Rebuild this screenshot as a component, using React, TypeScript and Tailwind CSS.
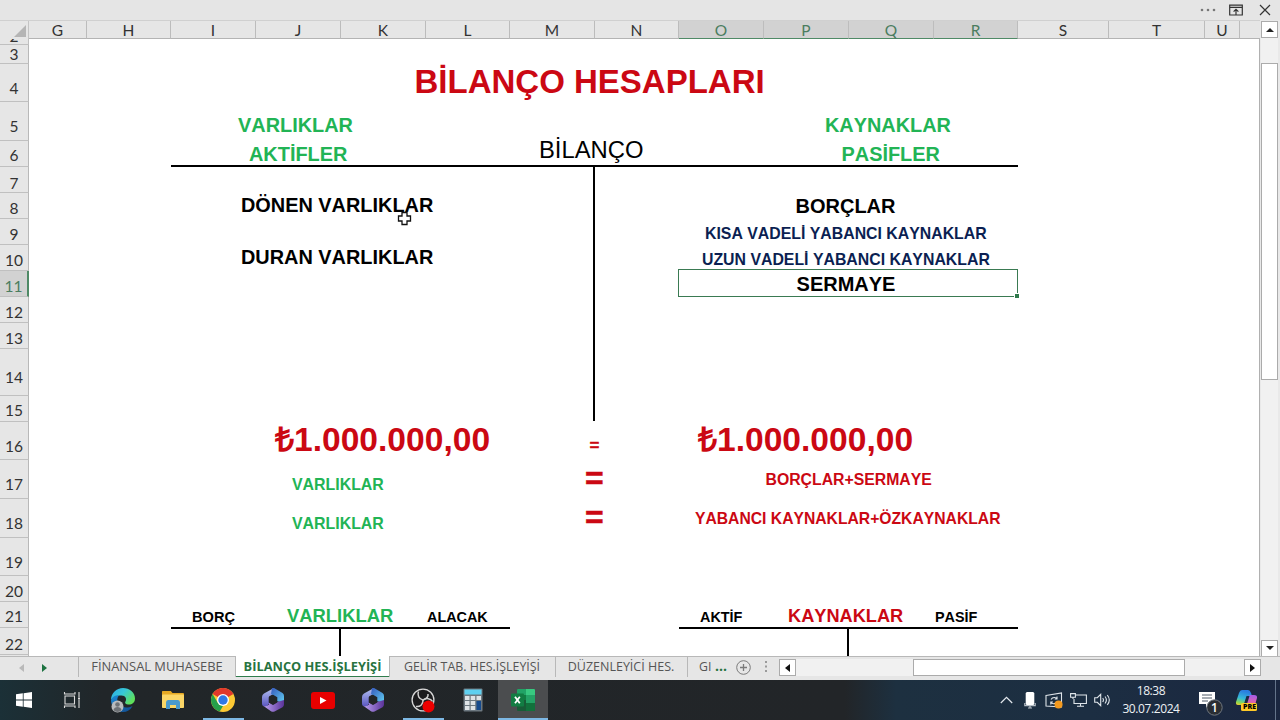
import React from 'react';

type CellItem = { text: string; cls: string };

const columns = [
  { id: 'G', w: 'w-[58px]' },
  { id: 'H', w: 'w-[84px]' },
  { id: 'I', w: 'w-[85px]' },
  { id: 'J', w: 'w-[85px]' },
  { id: 'K', w: 'w-[85px]' },
  { id: 'L', w: 'w-[84px]' },
  { id: 'M', w: 'w-[85px]' },
  { id: 'N', w: 'w-[84px]' },
  { id: 'O', w: 'w-[85px]', selected: true },
  { id: 'P', w: 'w-[85px]', selected: true },
  { id: 'Q', w: 'w-[85px]', selected: true },
  { id: 'R', w: 'w-[84px]', selected: true },
  { id: 'S', w: 'w-[91px]' },
  { id: 'T', w: 'w-[96px]' },
  { id: 'U', w: 'w-[35px]' },
];

const rows = [
  { id: 3, cls: 'h-[19px] pb-[1px]' },
  { id: 4, cls: 'h-[38px] pb-[5px]' },
  { id: 5, cls: 'h-[39px] pb-[6px]' },
  { id: 6, cls: 'h-[26px] pb-[3px]' },
  { id: 7, cls: 'h-[26px] pb-[1px]' },
  { id: 8, cls: 'h-[26px] pb-[2px]' },
  { id: 9, cls: 'h-[26px] pb-[2px]' },
  { id: 10, cls: 'h-[26px] pb-[2px]' },
  { id: 11, cls: 'h-[26px] pb-[2px]' },
  { id: 12, cls: 'h-[26px] pb-[2px]' },
  { id: 13, cls: 'h-[26px] pb-[2px]' },
  { id: 14, cls: 'h-[47px] pb-[10px]' },
  { id: 15, cls: 'h-[26px] pb-[3px]' },
  { id: 16, cls: 'h-[38px] pb-[5px]' },
  { id: 17, cls: 'h-[39px] pb-[6px]' },
  { id: 18, cls: 'h-[39px] pb-[6px]' },
  { id: 19, cls: 'h-[38px] pb-[5px]' },
  { id: 20, cls: 'h-[26px] pb-[2px]' },
  { id: 21, cls: 'h-[26px] pb-[3px]' },
  { id: 22, cls: 'h-[27px] pb-[2px]' },
];

const GREEN = 'text-[#22b455]';
const RED = 'text-[#cb0813]';
const NAVY = 'text-[#0b1f52]';

// col-start 1 = G, row-start 1 = row 2
const cells: CellItem[] = [
  { text: 'BİLANÇO HESAPLARI', cls: `col-start-5 row-start-3 pl-[73.5px] pb-[3px] text-[33px] font-bold ${RED}` },
  { text: 'VARLIKLAR', cls: `col-start-3 row-start-4 pl-[67px] pb-[4px] text-[19.9px] font-bold ${GREEN}` },
  { text: 'KAYNAKLAR', cls: `col-start-10 row-start-4 pl-[61px] pb-[4px] text-[19.9px] font-bold ${GREEN}` },
  { text: 'AKTİFLER', cls: `col-start-3 row-start-5 pl-[78px] pb-[1px] text-[19.9px] font-bold ${GREEN}` },
  { text: 'BİLANÇO', cls: 'col-start-7 row-start-5 pl-[29px] pb-[4px] text-[23.8px] text-black' },
  { text: 'PASİFLER', cls: `col-start-10 row-start-5 pl-[77.5px] pb-[1px] text-[19.9px] font-bold ${GREEN}` },
  { text: 'DÖNEN VARLIKLAR', cls: 'col-start-3 row-start-7 pl-[70px] pb-[2px] text-[19.9px] font-bold text-black' },
  { text: 'BORÇLAR', cls: 'col-start-10 row-start-7 pl-[31.5px] pb-[2px] text-[20px] font-bold text-black' },
  { text: 'KISA VADELİ YABANCI KAYNAKLAR', cls: `col-start-9 row-start-8 pl-[26px] pb-[2px] text-[15.85px] font-bold ${NAVY}` },
  { text: 'DURAN VARLIKLAR', cls: 'col-start-3 row-start-9 pl-[70px] pb-[2px] text-[19.9px] font-bold text-black' },
  { text: 'UZUN VADELİ YABANCI KAYNAKLAR', cls: `col-start-9 row-start-9 pl-[23px] pb-[2px] text-[15.85px] font-bold ${NAVY}` },
  { text: '₺1.000.000,00', cls: `col-start-4 row-start-15 pl-[19px] pb-[2px] text-[33.6px] font-bold ${RED}` },
  { text: '=', cls: `col-start-7 row-start-15 pl-[79.500px] pb-[5px] text-[17px] font-bold [-webkit-text-stroke:0.3px_#cb0813] ${RED}` },
  { text: '₺1.000.000,00', cls: `col-start-9 row-start-15 pl-[19px] pb-[2px] text-[33.6px] font-bold ${RED}` },
  { text: 'VARLIKLAR', cls: `col-start-4 row-start-16 pl-[36px] pb-[5px] text-[15.9px] font-bold ${GREEN}` },
  { text: '=', cls: `col-start-7 row-start-16 pl-[75px] pb-[4px] text-[32px] font-bold [-webkit-text-stroke:0.5px_#cb0813] ${RED}` },
  { text: 'BORÇLAR+SERMAYE', cls: `col-start-10 row-start-16 pl-[1.5px] pb-[10px] text-[15.8px] font-bold ${RED}` },
  { text: 'VARLIKLAR', cls: `col-start-4 row-start-17 pl-[36px] pb-[5px] text-[15.9px] font-bold ${GREEN}` },
  { text: '=', cls: `col-start-7 row-start-17 pl-[75px] pb-[4px] text-[32px] font-bold [-webkit-text-stroke:0.5px_#cb0813] ${RED}` },
  { text: 'YABANCI KAYNAKLAR+ÖZKAYNAKLAR', cls: `col-start-9 row-start-17 pl-[16px] pb-[10px] text-[15.7px] font-bold ${RED}` },
  { text: 'BORÇ', cls: 'col-start-3 row-start-20 pl-[21px] pb-[2px] text-[14.6px] font-bold text-black' },
  { text: 'VARLIKLAR', cls: `col-start-4 row-start-20 pl-[31px] pb-[2px] text-[18.4px] font-bold ${GREEN}` },
  { text: 'ALACAK', cls: 'col-start-6 row-start-20 pl-[1px] pb-[3px] text-[14.4px] font-bold text-black' },
  { text: 'AKTİF', cls: 'col-start-9 row-start-20 pl-[21px] pb-[3px] text-[14.4px] font-bold text-black' },
  { text: 'KAYNAKLAR', cls: `col-start-10 row-start-20 pl-[24px] pb-[2px] text-[18.2px] font-bold ${RED}` },
  { text: 'PASİF', cls: 'col-start-12 row-start-20 pl-[1px] pb-[3px] text-[14.4px] font-bold text-black' },
];

const TitleBar = () => (
  <div className="h-5 flex items-center justify-end bg-[#e5e5e5] text-[#444]">
    <svg width="16" height="4" className="mr-[13px]" fill="#777">
      <circle cx="2" cy="2" r="1.3" />
      <circle cx="8" cy="2" r="1.3" />
      <circle cx="14" cy="2" r="1.3" />
    </svg>
    <svg width="14" height="12" viewBox="0 0 14 12" className="mr-[16px]" fill="none" stroke="#333" strokeWidth="1.2">
      <path d="M.7 1.2h12.6v9.8H.7zM.7 3.4h12.6M7 11V5.5M4.6 7.6 7 5.3l2.4 2.3" />
    </svg>
    <svg width="12" height="12" viewBox="0 0 12 12" className="mr-[9px]" stroke="#333" strokeWidth="1.2">
      <path d="M1 1l10 10M11 1 1 11" />
    </svg>
  </div>
);

const ColumnHeader = () => (
  <div className="h-[19px] flex bg-[#e6e6e6] border-t border-[#d0d0d0] font-['Lato'] text-[15.5px] leading-[19px] text-[#333]">
    <div className="w-[29px] flex justify-end items-end pr-[2px] pb-[2px] border-r border-[#c4c4c4]">
      <svg width="12" height="12"><path d="M12 0v12H0z" fill="#b5b5b5" /></svg>
    </div>
    {columns.map((col) => (
      <div
        key={col.id}
        className={`${col.w} text-center border-r border-b ${
          col.selected ? 'bg-[#d2d2d2] text-[#4b7d5f] border-r-[#bdbdbd] border-b-[#4f8a66]' : 'border-r-[#bcbcbc] border-b-[#b4b4b4]'
        }`}
      >
        {col.id}
      </div>
    ))}
    <div className="flex-1 border-b border-[#b4b4b4]" />
  </div>
);

const RowHeader = () => (
  <div className="w-[29px] h-[617px] overflow-hidden bg-[#e6e6e6] font-['Lato'] text-[15.5px] leading-none text-[#333]">
    <div className="h-[6px] flex items-end justify-center overflow-hidden border-b border-r border-[#c0c0c0]">2</div>
    {rows.map((row) => (
      <div
        key={row.id}
        className={`${row.cls} flex items-end justify-center border-b border-b-[#c0c0c0] ${
          row.id === 11 ? 'bg-[#d2d2d2] text-[#4b7d5f] border-r-2 border-r-[#4f8a66]' : 'border-r border-r-[#b8b8b8]'
        }`}
      >
        {row.id}
      </div>
    ))}
    <div className="h-[3px] border-r border-[#b8b8b8]" />
  </div>
);

const Sheet = () => (
  <div className="relative w-[1231px] h-[617px] overflow-hidden bg-white border-r border-[#b0b0b0] grid grid-cols-[58px_84px_85px_85px_85px_84px_85px_84px_85px_85px_85px_84px_91px_96px_35px] grid-rows-[5px_19px_38px_39px_26px_26px_26px_26px_26px_26px_26px_26px_47px_26px_38px_39px_39px_38px_26px_26px_29px] font-['Liberation_Sans',Arial,sans-serif] leading-none [font-kerning:none]">
    {/* T account rules */}
    <div className="col-start-3 col-end-13 row-start-5 self-end h-[2px] -mb-px bg-black" />
    <div className="col-start-8 row-start-6 row-end-[15] w-[2px] -ml-[2px] bg-black" />
    <div className="col-start-3 col-end-7 row-start-20 self-end h-[2px] -mb-[2px] bg-black" />
    <div className="col-start-5 row-start-21 w-[2px] -ml-[2px] bg-black" />
    <div className="col-start-9 col-end-13 row-start-20 self-end h-[2px] -mb-[2px] bg-black" />
    <div className="col-start-11 row-start-21 w-[2px] -ml-[2px] bg-black" />

    {cells.map((cell, i) => (
      <div key={i} className={`${cell.cls} w-0 self-end leading-none whitespace-nowrap`}>
        {cell.text}
      </div>
    ))}

    {/* selected cell */}
    <div className="relative col-start-9 col-end-13 row-start-10 border border-[#3a7a52] -mt-px -mb-px -ml-px flex items-end justify-center pr-[4px] pb-[2px] text-[20px] font-bold text-black">
      SERMAYE
      <span className="absolute -right-[2px] -bottom-[2px] w-[5px] h-[5px] bg-[#2f7a4c] border-t border-l border-white" />
    </div>

    {/* cell cursor */}
    <svg className="absolute left-[368px] top-[172px]" width="15" height="15" viewBox="0 0 15 15">
      <path d="M5 1.5h5v3.5h3.5v5H10v3.5H5V10H1.5V5H5z" fill="#fff" stroke="#111" strokeWidth="1.3" />
    </svg>
  </div>
);

const arrowBox = 'w-[17px] h-[17px] shrink-0 flex items-center justify-center bg-white border border-[#ababab]';

const VerticalScroll = () => (
  <div className="w-[20px] h-[637px] flex flex-col items-start pl-[1px] pt-[1px] bg-[#e9e9e9]">
    <div className={arrowBox}>
      <svg width="8" height="5"><path d="M0 5l4-4 4 4z" fill="#222" /></svg>
    </div>
    <div className="w-[17px] h-[25px] bg-[#f1f1f1]" />
    <div className="w-[17px] h-[317px] bg-white border border-[#ababab]" />
    <div className="w-[17px] flex-1 bg-[#f1f1f1]" />
    <div className={arrowBox}>
      <svg width="8" height="5"><path d="M0 0l4 4 4-4z" fill="#222" /></svg>
    </div>
  </div>
);

const SheetTabs = () => (
  <div className="h-6 flex bg-[#e6e6e6] border-t border-[#b8b8b8] font-['Open_Sans'] text-[12.3px] leading-[20px] text-[#555]">
    <div className="w-[78px] h-[21px] flex items-center">
      <svg width="5" height="8" className="ml-[19px]"><path d="M5 0v8L0 4z" fill="#b9b9b9" /></svg>
      <svg width="5" height="8" className="ml-[18px]"><path d="M0 0v8l5-4z" fill="#1c7240" /></svg>
    </div>
    <div className="w-[158px] h-[20px] border-l border-r border-[#b8b8b8] text-center whitespace-nowrap text-[12.9px] leading-[19px]">FİNANSAL MUHASEBE</div>
    <div className="w-[153px] h-[21px] -mt-px bg-white border-b border-[#2f7d4d] text-center whitespace-nowrap text-[12.8px] font-bold text-[#27733f]">BİLANÇO HES.İŞLEYİŞİ</div>
    <div className="w-[167px] h-[20px] pr-[1px] border-l border-r border-[#b8b8b8] text-center whitespace-nowrap text-[12.4px]">GELİR TAB. HES.İŞLEYİŞİ</div>
    <div className="w-[132px] h-[20px] pr-px border-r border-[#b8b8b8] text-center whitespace-nowrap text-[12.5px]">DÜZENLEYİCİ HES.</div>
    <div className="w-[48px] h-[20px] flex pl-[11px]">
      <span className="w-[12px] overflow-hidden">GI</span>
      <span className="ml-[4px] text-[14px] font-bold text-[#27733f] leading-[18px]">...</span>
    </div>
    <svg width="16" height="16" viewBox="0 0 16 16" className="mt-[3px]" fill="none" stroke="#7a7a7a">
      <circle cx="7.5" cy="7.5" r="6.8" />
      <path d="M7.5 4v7M4 7.5h7" strokeWidth="1.3" />
    </svg>
    <svg width="3" height="12" className="ml-[13px] mt-[4px]" fill="#9a9a9a">
      <path d="M0 0h2v2H0zM0 4.5h2v2H0zM0 9h2v2H0z" />
    </svg>
    <div className="ml-[11px] mt-[2px] w-[482px] h-[17px] flex bg-[#f1f1f1]">
      <div className={arrowBox}>
        <svg width="5" height="8"><path d="M5 0v8L0 4z" fill="#111" /></svg>
      </div>
      <div className="w-[117px]" />
      <div className="w-[272px] bg-white border border-[#ababab]" />
      <div className="flex-1" />
      <div className={arrowBox}>
        <svg width="5" height="8"><path d="M0 0v8l5-4z" fill="#111" /></svg>
      </div>
    </div>
  </div>
);

const WindowsIcon = () => (
  <svg width="16" height="16" viewBox="0 0 16 16" fill="#fff">
    <path d="M0 2.3 6.8 1.3v6.3H0zM7.6 1.2 16 0v7.6H7.6zM0 8.4h6.8v6.3L0 13.7zM7.6 8.4H16V16l-8.4-1.2z" />
  </svg>
);

const TaskViewIcon = () => (
  <svg width="18" height="18" viewBox="0 0 18 18" fill="none" stroke="#dcdcdc" strokeWidth="1.1">
    <path d="M2 5h9.5v8H2zM1.5 1v2H12V1M1.5 17v-2H12v2M16 1v5M16 9v8" />
    <path d="M15 6.5h2v2h-2z" fill="#dcdcdc" stroke="none" />
  </svg>
);

const EdgeIcon = () => (
  <svg width="26" height="26" viewBox="0 0 26 26">
    <defs>
      <linearGradient id="edgeTop" x1="0" y1="0" x2="1" y2=".6">
        <stop offset="0" stopColor="#2aa7e8" />
        <stop offset=".5" stopColor="#37c9d6" />
        <stop offset="1" stopColor="#5fe05a" />
      </linearGradient>
      <linearGradient id="edgeLow" x1="0" y1="0" x2="1" y2="1">
        <stop offset="0" stopColor="#1b8ad8" />
        <stop offset="1" stopColor="#114a8b" />
      </linearGradient>
    </defs>
    <path d="M1 13C1 6 6.5 1 13 1s12 4.5 12 10.5c0 4-3 6-6 6-3.5 0-4.5-1.500-3.5-3 1.500-2.500 0-6-4-6C6 8.500 2 11 1 13z" fill="url(#edgeTop)" />
    <path d="M1 13c1-3 4.500-5.500 8-4.500-2 2-2.500 6 0 9 3 3.500 8.500 4 13.500 1.500C20.500 23 17 25 13 25 6 25 1 20 1 13z" fill="url(#edgeLow)" />
    <circle cx="7.5" cy="19.5" r="6" fill="#b9bbbd" />
    <circle cx="7.5" cy="17.5" r="2.3" fill="#6d7175" />
    <path d="M3.5 23c.5-4 7.5-4 8 0-2 2.5-6 2.5-8 0z" fill="#6d7175" />
  </svg>
);

const FolderIcon = () => (
  <svg width="22" height="20" viewBox="0 0 22 20">
    <path d="M0 1.5Q0 1 .8 1h8l1.7 2H21q1 0 1 1v4H0z" fill="#e5a823" />
    <rect y="4.5" width="22" height="13.5" rx=".8" fill="#fbd667" />
    <path d="M4 19v-6.5Q4 10 6 10h10q2 0 2 2.5V19h-4v-4H8v4z" fill="#4a9ace" />
  </svg>
);

const ChromeIcon = () => (
  <svg width="24" height="24" viewBox="0 0 24 24">
    <circle cx="12" cy="12" r="12" fill="#fcc934" />
    <path d="M12 12 1.6 6A12 12 0 0 1 22.4 6z" fill="#e0382c" />
    <path d="M1.6 6 6.9 15l5.1 3-3.3 5.5A12 12 0 0 1 1.6 6z" fill="#25a04b" />
    <circle cx="12" cy="12" r="6" fill="#fff" />
    <circle cx="12" cy="12" r="4.7" fill="#2f78e6" />
  </svg>
);

const M365Icon = ({ id }: { id: string }) => (
  <svg width="22" height="24" viewBox="0 0 22 24">
    <defs>
      <linearGradient id={`${id}a`} x1="0" y1="0" x2="0" y2="1">
        <stop offset="0" stopColor="#b4c3f2" />
        <stop offset="1" stopColor="#5a55c0" />
      </linearGradient>
      <linearGradient id={`${id}b`} x1="0" y1="0" x2="1" y2="1">
        <stop offset="0" stopColor="#3457bd" />
        <stop offset="1" stopColor="#62d0f2" />
      </linearGradient>
      <linearGradient id={`${id}c`} x1="0" y1="0" x2="1" y2="0">
        <stop offset="0" stopColor="#bda4f4" />
        <stop offset="1" stopColor="#5b3399" />
      </linearGradient>
    </defs>
    <path d="M12 0 2 5.5Q0 6.700 0 9v6.5Q0 18.5 3 18.5q3-.5 4-3V8.5L13 5z" fill={`url(#${id}a)`} />
    <path d="M10 0h2l8.500 5Q22 6 22 8v7l-7.500-2V9.500L9 6z" fill={`url(#${id}b)`} />
    <path d="M1.500 18q3 1 5.500-1.500v-2l4 2 4-2.500 7-2v4.500q0 1.800-1.500 2.700L13 23.300q-2 1-4 0z" fill={`url(#${id}c)`} />
    <path d="M6.700 9.300 11 6.700l4.300 2.600v5.200L11 17l-4.300-2.500z" fill="#222528" />
  </svg>
);

const YoutubeIcon = () => (
  <svg width="24" height="17" viewBox="0 0 24 17">
    <rect width="24" height="17" rx="3" fill="#e80000" />
    <path d="M9 5v7l6.5-3.5z" fill="#fff" />
  </svg>
);

const ObsIcon = () => (
  <svg width="25" height="25" viewBox="0 0 25 25">
    <circle cx="12" cy="12" r="10.9" fill="#1b1b1d" stroke="#d8d8d8" strokeWidth="1.3" />
    <g fill="none" stroke="#cfcfcf" strokeWidth="1.5">
      <path d="M7.5 3.5c-1.5 4 .5 7.5 4.5 8.5 3.5-2.5 7.5-1.5 9.5 1.5" />
      <path d="M12 12c.3 4-2.5 7-7 6.5" />
      <path d="M12 12c3-1 5.5-3 5-6" />
    </g>
    <circle cx="17.5" cy="18.5" r="6" fill="#ec0000" />
  </svg>
);

const CalcIcon = () => (
  <svg width="20" height="24" viewBox="0 0 20 24">
    <rect x=".5" y=".5" width="19" height="23" rx="1" fill="#6d7880" />
    <rect x="1.5" y="1.5" width="17" height="5" fill="#5fd0f0" />
    <path d="M2 8h4.5v4H2zM7.7 8h4.5v4H7.7zM13.5 8H18v4h-4.5zM2 13h4.5v4H2zM7.7 13h4.5v4H7.7zM2 18h4.5v4H2zM7.7 18h4.5v4H7.7z" fill="#dfe3e6" />
    <path d="M13.5 13H18v9h-4.5z" fill="#164a8c" />
  </svg>
);

const ExcelIcon = () => (
  <svg width="24" height="22" viewBox="0 0 24 22">
    <rect x="6" width="18" height="22" rx="1" fill="#185c37" />
    <path d="M6 1q0-1 1-1h8v6H6z" fill="#21a366" />
    <path d="M15 0h8q1 0 1 1v5h-9z" fill="#38c880" />
    <path d="M6 6h9v5H6z" fill="#107c41" />
    <path d="M15 6h9v8h-9z" fill="#24a266" />
    <path d="M15 14h9v7q0 1-1 1h-8z" fill="#12713c" />
    <rect y="4.5" width="13" height="13" rx="1" fill="#127d43" />
    <path d="M4 7.8 8.8 14.2M8.8 7.8 4 14.2" stroke="#fff" strokeWidth="1.8" />
  </svg>
);

const apps = [
  { key: 'edge', icon: <EdgeIcon /> },
  { key: 'folder', icon: <FolderIcon /> },
  { key: 'chrome', icon: <ChromeIcon />, open: true },
  { key: 'm365-1', icon: <M365Icon id="ma" /> },
  { key: 'youtube', icon: <YoutubeIcon /> },
  { key: 'm365-2', icon: <M365Icon id="mb" /> },
  { key: 'obs', icon: <ObsIcon />, open: true },
  { key: 'calc', icon: <CalcIcon /> },
  { key: 'excel', icon: <ExcelIcon />, active: true },
];

const Taskbar = () => (
  <div className="h-10 flex bg-[linear-gradient(90deg,#1b3037_0%,#212629_8%,#222528_66%,#1d3040_70%,#1c2e42_85%,#1b2740_100%)]">
    <div className="w-[48px] flex items-center justify-center"><WindowsIcon /></div>
    <div className="w-[50px] flex items-center justify-center pr-[2px]"><TaskViewIcon /></div>
    {apps.map((app) => (
      <div
        key={app.key}
        className={`relative w-[50px] flex items-center justify-center ${app.active ? 'bg-[#4b4d4f]' : ''}`}
      >
        {app.icon}
        {app.open && <span className="absolute bottom-0 left-[5px] w-[41px] h-[2px] bg-[#7db8e4]" />}
        {app.active && <span className="absolute bottom-0 left-0 w-full h-[2px] bg-[#7db8e4]" />}
      </div>
    ))}
    <div className="flex-1" />
    <div className="flex items-center text-white">
      <svg width="13" height="8" viewBox="0 0 13 8" fill="none" stroke="#e4e9ee" strokeWidth="1.2">
        <path d="M.8 7 6.5 1.3 12.2 7" />
      </svg>
      <svg width="12" height="17" viewBox="0 0 12 17" className="ml-[11px]">
        <rect x="1.7" width="8.6" height="13" rx="1.5" fill="#fff" />
        <path d="M.8 11v2.7h10.4V11M6 13.5V16M4 16h4" fill="none" stroke="#b8c0c8" strokeWidth="1.2" />
      </svg>
      <svg width="18" height="17" viewBox="0 0 18 17" className="ml-[9px]" fill="none" stroke="#dfe5ea" strokeWidth="1.1">
        <path d="M1 3.5 16.5 1v14L1 14zM6 7.5c1.5-2.5 5-2.5 6-.5M12 4.5V7H9.7M11.5 10c-1.2 2.2-4.5 2.2-5.7.2M5.8 12.5V10H8" />
        <circle cx="13.5" cy="12.5" r="4" fill="#f39a1f" stroke="none" />
      </svg>
      <svg width="17" height="14" viewBox="0 0 17 14" className="ml-[7px]" fill="none" stroke="#dfe5ea" strokeWidth="1.1">
        <path d="M6 2h10.4v8.5H4V6M7 13.3h7M10.5 10.5v2.5M.6.6h4.8v3.7H.6zM3 4.3V6" />
      </svg>
      <svg width="17" height="14" viewBox="0 0 17 14" className="ml-[7px]" fill="none" stroke="#dfe5ea" strokeWidth="1.1">
        <path d="M.7 4.7h2.6L6.7 1.3v11.4L3.3 9.3H.7zM8.7 5q1.5 2 0 4M11 3.5q2.8 3.5 0 7M13.3 2q4 5 0 10" />
      </svg>
    </div>
    <div className="ml-[9px] w-[62px] text-center font-['Open_Sans'] text-[12px] leading-[18px] pt-[2px] text-[#eef1f4]">
      <div className="-tracking-[0.4px]">18:38</div>
      <div className="-tracking-[0.4px] whitespace-nowrap">30.07.2024</div>
    </div>
    <div className="relative ml-[16px] w-[26px]">
      <svg width="26" height="28" viewBox="0 0 26 28" className="mt-[10px]">
        <path d="M1 2h16v12H11l-3 4v-4H1z" fill="#fff" />
        <path d="M4 5h10M4 8h10M4 11h6" stroke="#4d5966" />
        <circle cx="16.5" cy="17.5" r="7.7" fill="#2a2e33" stroke="#70777e" />
      </svg>
      <span className="absolute left-[13px] top-[20px] font-['Open_Sans'] text-[12px] font-semibold leading-[15px] text-white">1</span>
    </div>
    <div className="relative ml-[11px] w-[24px]">
      <svg width="24" height="24" viewBox="0 0 24 24" className="mt-[9px]">
        <defs>
          <linearGradient id="copA" x1=".3" y1="0" x2="0" y2="1">
            <stop offset="0" stopColor="#2a7de0" />
            <stop offset=".5" stopColor="#35b9d8" />
            <stop offset=".8" stopColor="#8ed94e" />
            <stop offset="1" stopColor="#ffc52e" />
          </linearGradient>
          <linearGradient id="copB" x1="0" y1="0" x2="0" y2="1">
            <stop offset="0" stopColor="#a35be8" />
            <stop offset="1" stopColor="#f0669a" />
          </linearGradient>
        </defs>
        <path d="M7 1h6q2 0 3 3l1 3h-3q-2 0-3 3l-2 6H3q-2.5 0-2-3L4 4Q5 1 7 1z" fill="url(#copA)" />
        <path d="M15 6h4q3.5 0 3 3l-2 7h-9l2-7q1-3 2-3z" fill="url(#copB)" />
        <path d="M11.5 7h3l-2.5 8h-3z" fill="#1c2a41" />
        <rect x="6" y="14" width="16" height="8" rx="1.5" fill="#ffc928" />
      </svg>
      <span className="absolute left-[8px] top-[23px] font-['Open_Sans'] text-[7px] font-extrabold leading-[8px] text-black">PRE</span>
    </div>
    <div className="ml-[16px] w-[5px] border-l border-[#64748a]" />
  </div>
);

const App: React.FC = () => {
  return (
    <div className="w-[1280px] h-[720px] overflow-hidden flex flex-col bg-[#e6e6e6]">
      <TitleBar />
      <div className="h-[636px] flex">
        <div className="w-[1260px] flex flex-col">
          <ColumnHeader />
          <div className="flex">
            <RowHeader />
            <Sheet />
          </div>
        </div>
        <VerticalScroll />
      </div>
      <SheetTabs />
      <Taskbar />
    </div>
  );
};

export default App;
